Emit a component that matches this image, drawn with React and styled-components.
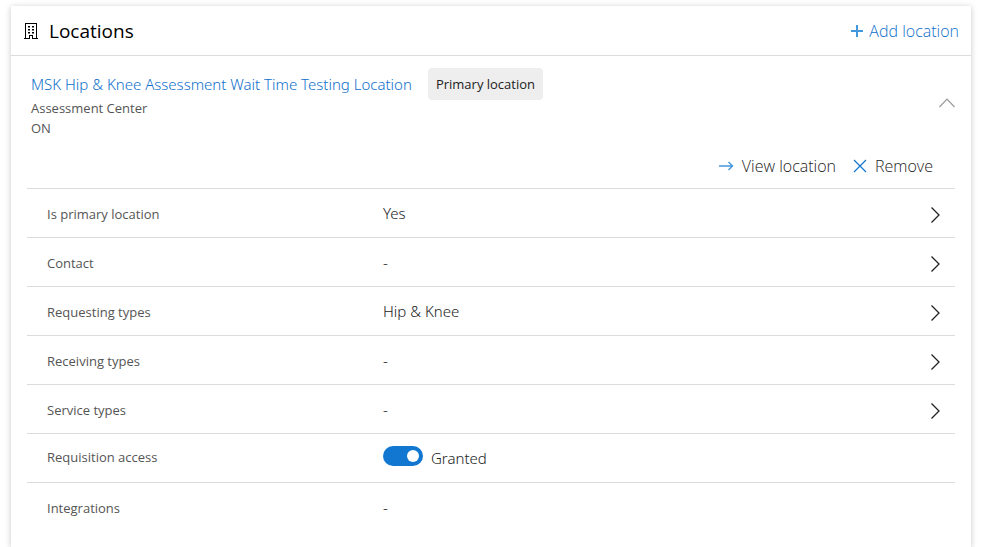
import React, { useId, useState } from "react";
import styled, { createGlobalStyle } from "styled-components";

const GlobalStyle = createGlobalStyle`
  *, *::before, *::after { box-sizing: border-box; }
  body {
    margin: 0;
    background: #fff;
    color: #222;
    font-family: "Open Sans", "Noto Sans", sans-serif;
    font-size: 15px;
    font-weight: 400;
    line-height: 20px;
  }
  button { font: inherit; color: inherit; }
`;

const lightFont = `
  font-family: "Noto Sans", "Open Sans", sans-serif;
  font-weight: 300;
`;

const Page = styled.main`
  display: flex;
  flex-direction: column;
  min-height: 100vh;
  padding: 6px 11px 0;
`;

const Card = styled.section`
  flex: 1;
  background: #fff;
  box-shadow: 0 1px 6px rgba(0, 0, 0, 0.22);
`;

const CardHeader = styled.header`
  display: flex;
  align-items: center;
  justify-content: space-between;
  height: 50px;
  padding: 0 12px;
  border-bottom: 1px solid #dcdcdc;
`;

const Title = styled.h2`
  display: flex;
  align-items: center;
  gap: 10px;
  margin: 0;
  color: #000;
  font-size: 19px;
  font-weight: 500;
  line-height: 24px;
`;

const ActionButton = styled.button`
  display: flex;
  align-items: center;
  gap: ${(p) => p.$gap}px;
  padding: 0;
  border: 0;
  background: none;
  color: ${(p) => (p.$accent ? "#0f70cb" : "#222")};
  font-size: 16px;
  font-weight: 300;
  cursor: pointer;
`;

const Summary = styled.div`
  display: flex;
  align-items: center;
  justify-content: space-between;
  padding: 12px 16px 0 20px;
`;

const NameLine = styled.div`
  display: flex;
  align-items: center;
  gap: 16px;
  margin-bottom: -2px;
`;

const LocationLink = styled.a`
  color: #0f70cb;
  ${lightFont}
  text-decoration: none;
`;

const Badge = styled.span`
  padding: 6px 8px;
  border-radius: 4px;
  background: #eee;
  font-size: 13px;
`;

const Meta = styled.div`
  color: #555;
  font-size: 13px;
`;

const IconButton = styled.button`
  display: flex;
  padding: 0;
  border: 0;
  background: none;
  cursor: pointer;
`;

const Actions = styled.div`
  display: flex;
  justify-content: flex-end;
  gap: 17px;
  padding: 18px 38px 12px;
`;

const Details = styled.div`
  margin: 0 16px;
`;

const Row = styled.div`
  display: grid;
  grid-template-columns: 336px 1fr auto;
  align-items: center;
  height: 49px;
  padding: ${(p) => p.$top || 0}px 14px ${(p) => p.$bottom || 0}px 20px;
  border-top: 1px solid #dcdcdc;
`;

const Label = styled.label`
  padding-bottom: 2px;
  color: #555;
  font-size: 13px;
`;

const Value = styled.div`
  display: flex;
  align-items: center;
  gap: 8px;
  padding-bottom: ${(p) => p.$lift || 4}px;
  ${lightFont}
`;

const Switch = styled.input`
  display: flex;
  align-items: center;
  justify-content: flex-end;
  appearance: none;
  width: 40px;
  height: 20px;
  margin: 0;
  padding: 4px;
  border-radius: 10px;
  background: #1177d1;
  cursor: pointer;

  &::before {
    content: "";
    width: 12px;
    height: 12px;
    border-radius: 50%;
    background: #fff;
  }

  &:not(:checked) {
    justify-content: flex-start;
    background: #767676;
  }
`;

const SwitchText = styled.span`
  padding-top: 4px;
`;

const BuildingIcon = () => (
  <svg width="16" height="18" viewBox="0 0 16 18" aria-hidden="true" fill="#000">
    <path d="M2 1h12v15h1v1H9v-3H7v3H1v-1h1zM3 2v14h3v-3h4v3h3V2z" fillRule="evenodd" />
    <path d="M5 4h2v1.4H5zM9 4h2v1.4H9zM5 7h2v1.4H5zM9 7h2v1.4H9zM5 10h2v1.4H5zM9 10h2v1.4H9z" />
  </svg>
);

const PlusIcon = () => (
  <svg width="12" height="12" viewBox="0 0 12 12" aria-hidden="true">
    <path d="M6 0v12M0 6h12" stroke="#4597dc" strokeWidth="2" />
  </svg>
);

const ArrowIcon = () => (
  <svg width="15" height="10" viewBox="0 0 15 10" aria-hidden="true" fill="none">
    <path d="M0 5h14M9.5 1l4 4-4 4" stroke="#4597dc" strokeWidth="1.4" />
  </svg>
);

const CrossIcon = () => (
  <svg width="14" height="14" viewBox="0 0 14 14" aria-hidden="true">
    <path d="M1 1l12 12M13 1L1 13" stroke="#1177d1" strokeWidth="1.2" />
  </svg>
);

const ChevronUp = () => (
  <svg width="16" height="10" viewBox="0 0 16 10" aria-hidden="true" fill="none">
    <path d="M0.5 9L8 1.2 15.5 9" stroke="#999" strokeWidth="1.2" />
  </svg>
);

const ChevronRight = () => (
  <svg width="12" height="16" viewBox="0 0 12 16" aria-hidden="true" fill="none">
    <path d="M2.5 0.5L10 8 2.5 15.5" stroke="#222" strokeWidth="1.3" />
  </svg>
);

const fields = [
  { label: "Is primary location", value: "Yes" },
  { label: "Contact", value: "-" },
  { label: "Requesting types", value: "Hip & Knee" },
  { label: "Receiving types", value: "-" },
  { label: "Service types", value: "-" },
];

function DetailRow({ label, value }) {
  return (
    <Row $top={4}>
      <Label as="span">{label}</Label>
      <Value>{value}</Value>
      <IconButton type="button" aria-label={`Edit ${label.toLowerCase()}`}>
        <ChevronRight />
      </IconButton>
    </Row>
  );
}

export default function App() {
  const [granted, setGranted] = useState(true);
  const [open, setOpen] = useState(true);
  const accessId = useId();

  return (
    <>
      <GlobalStyle />
      <Page>
        <Card>
          <CardHeader>
            <Title>
              <BuildingIcon />
              Locations
            </Title>
            <ActionButton type="button" $accent $gap={6}>
              <PlusIcon />
              Add location
            </ActionButton>
          </CardHeader>
          <Summary>
            <div>
              <NameLine>
                <LocationLink href="#location">
                  MSK Hip &amp; Knee Assessment Wait Time Testing Location
                </LocationLink>
                <Badge>Primary location</Badge>
              </NameLine>
              <Meta>Assessment Center</Meta>
              <Meta>ON</Meta>
            </div>
            <IconButton
              type="button"
              aria-label="Toggle location details"
              aria-expanded={open}
              onClick={() => setOpen(!open)}
            >
              <ChevronUp />
            </IconButton>
          </Summary>
          {open && (
            <>
              <Actions>
                <ActionButton type="button" $gap={8}>
                  <ArrowIcon />
                  View location
                </ActionButton>
                <ActionButton type="button" $gap={8}>
                  <CrossIcon />
                  Remove
                </ActionButton>
              </Actions>
              <Details>
                {fields.map((field) => (
                  <DetailRow key={field.label} {...field} />
                ))}
                <Row $bottom={1}>
                  <Label htmlFor={accessId}>Requisition access</Label>
                  <Value $lift={3}>
                    <Switch
                      id={accessId}
                      type="checkbox"
                      role="switch"
                      checked={granted}
                      onChange={(e) => setGranted(e.target.checked)}
                    />
                    <SwitchText>{granted ? "Granted" : "Denied"}</SwitchText>
                  </Value>
                </Row>
                <Row $top={4}>
                  <Label as="span">Integrations</Label>
                  <Value>-</Value>
                </Row>
              </Details>
            </>
          )}
        </Card>
      </Page>
    </>
  );
}
